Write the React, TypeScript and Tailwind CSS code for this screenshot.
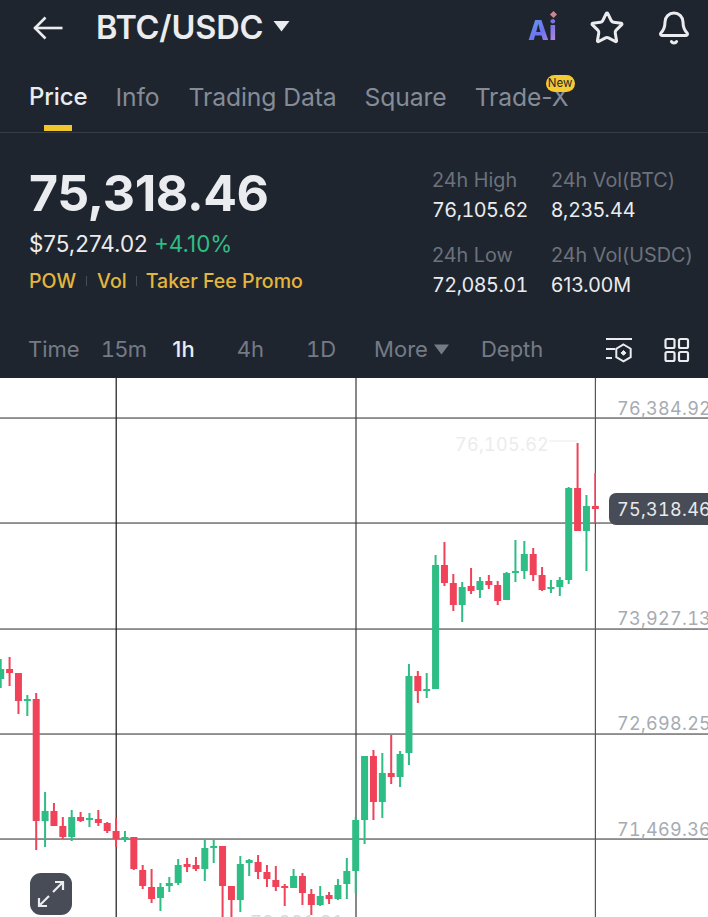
import React from "react";
import { Star, Bell } from "lucide-react";

const G = "#2EBD85";
const R = "#F0435A";
type C = [number, number, number, number, number];
// [high, low, bodyTop, bodyBottom, colour 0=green 1=red]
const candles: C[] = [
  [659,688,669,679,0],[657,686,669,673,1],[673,714,673,701,1],[695,716,699,701,0],[693,850,699,821,1],
  [792,847,811,821,0],[803,826,811,826,1],[817,839,826,837,1],[810,841,817,837,0],[812,822,817,821,1],
  [813,827,818,820,0],[810,826,819,823,1],[822,833,823,831,1],[818,847,831,839,1],[831,842,837,839,0],
  [837,870,837,869,1],[865,889,870,886,1],[869,903,887,899,1],[883,911,887,898,0],[877,892,883,886,0],
  [859,885,865,883,0],[858,872,864,867,1],[857,871,865,869,1],[840,881,848,869,0],[840,863,846,848,0],
  [846,917,846,886,1],[886,917,886,900,1],[856,912,864,900,0],[859,876,860,863,0],[855,879,862,872,1],
  [865,887,872,879,1],[866,891,880,887,1],[884,906,886,888,1],[869,888,876,888,0],[873,905,876,893,1],
  [889,915,894,905,1],[886,906,896,905,0],[892,904,895,899,1],[879,900,885,899,0],[858,899,871,884,0],
  [817,893,820,871,0],[756,844,756,820,0],[750,820,756,802,1],[753,818,773,802,0],[735,784,773,777,1],
  [751,787,754,777,0],[664,765,676,753,0],[671,703,676,691,1],[673,698,689,691,0],[555,689,565,689,0],
  [542,586,565,583,1],[574,611,583,605,1],[582,622,587,605,0],[568,594,586,591,1],[577,598,581,590,0],
  [575,589,581,585,1],[581,605,585,601,1],[572,600,573,600,0],[540,582,571,573,0],[541,579,554,571,0],
  [548,581,554,575,1],[567,591,575,590,1],[580,593,587,589,0],[577,596,580,587,0],[487,584,488,580,0],
  [443,531,488,531,1],[495,571,506,531,0],[473,523,506,509,1],
];

function ChartLines() {
  return (
    <svg className="absolute inset-0" width="708" height="539" viewBox="0 378 708 539">
      {[418, 523, 629, 734, 839].map((y) => (
        <rect key={y} x="0" y={y - 0.6} width="708" height="1.3" fill="#5a5a5a" />
      ))}
      <rect x="115.6" y="378" width="1.2" height="539" fill="#1a1a1a" />
      <rect x="355.4" y="378" width="1.2" height="539" fill="#3a3a3a" />
      <rect x="594.8" y="378" width="1.2" height="539" fill="#555555" />
      <rect x="549" y="440.5" width="29" height="1" fill="#ececec" />
      {candles.map(([hi, lo, top, bot, c], i) => {
        const x = 0.7 + 8.875 * i;
        const f = c ? R : G;
        const last = i === candles.length - 1;
        return (
          <g key={i} fill={f}>
            <rect x={x - 1} y={hi} width={last ? 1.6 : 2} height={lo - hi} />
            <rect x={x - 3.5} y={top} width="7" height={Math.max(bot - top, 2)} />
          </g>
        );
      })}
    </svg>
  );
}

export default function App() {
  return (
    <div className="w-[708px] h-[917px] overflow-hidden bg-white flex flex-col font-['Inter',sans-serif]">
      <header className="bg-[#1f252e] h-[378px] shrink-0 flex flex-col">
        {/* Top bar */}
        <div className="h-[56px] flex items-center pl-[33px] pr-[16px]">
          <svg width="30" height="24" viewBox="0 0 30 24" fill="none" stroke="#eaecef" strokeWidth="2.6">
            <path d="M1.5 12H29.5" />
            <path d="M12.5 1.5L2 12l10.5 10.5" />
          </svg>
          <span className="ml-[33px] text-[32.5px] font-semibold tracking-[-0.2px] text-[#eaecef]">BTC/USDC</span>
          <svg width="17" height="12" viewBox="0 0 17 12" className="ml-[10px] mb-[4px]">
            <path d="M0.5 1h16L8.5 11.5z" fill="#eaecef" />
          </svg>
          <div className="ml-auto flex items-center">
            <span className="relative mt-[5px] mr-[2px] w-[30px] h-[28px] flex items-center">
              <span className="text-[27px] leading-[28px] font-extrabold tracking-[0.3px] bg-gradient-to-br from-[#5b9df2] via-[#6f72ee] to-[#c78ad6] bg-clip-text text-transparent">Ai</span>
              <span className="absolute left-[23px] top-[-5px] w-[5px] h-[5px] rotate-45 bg-[#c9878f]" />
            </span>
            <Star size={36} strokeWidth={2} className="text-[#eaecef] ml-[29px]" />
            <Bell size={36} strokeWidth={2} className="text-[#eaecef] ml-[31px]" />
          </div>
        </div>
        {/* Tabs */}
        <div className="h-[77px] border-b border-[#363c45] relative flex items-start pl-[29px] pt-[24px] text-[24.7px] tracking-[-0.1px] text-[#848c98] leading-[34px]">
          <span className="text-[#eaecef] text-[24px] font-medium relative">
            Price
            <span className="absolute left-[15px] top-[45px] w-[28px] h-[6px] bg-[#f0c52e]" />
          </span>
          <span className="ml-[28px]">Info</span>
          <span className="ml-[29px]">Trading Data</span>
          <span className="ml-[28px]">Square</span>
          <span className="relative ml-[28px]">
            Trade-X
            <span className="absolute left-[71px] top-[-5px] w-[29px] h-[17px] rounded-full bg-[#f5cb33] text-[#1f2630] text-[11.5px] leading-[17px] text-center tracking-normal">New</span>
          </span>
        </div>
        {/* Stats */}
        <div className="h-[197px] flex justify-between pl-[29px]">
          <div className="flex flex-col">
            <div className="mt-[30px] text-[50px] leading-[60px] font-bold tracking-[-0.4px] text-[#eaecef]">75,318.46</div>
            <div className="mt-[7px] text-[22.4px] leading-[28px] text-[#eaecef]">
              $75,274.02 <span className="text-[#2ebd85]">+4.10%</span>
            </div>
            <div className="mt-[9px] flex items-center text-[19.6px] leading-[28px] font-medium text-[#e3b63d]">
              <span>POW</span>
              <span className="mx-[10px] w-px h-[10px] bg-[#474d57]" />
              <span>Vol</span>
              <span className="mx-[9px] w-px h-[10px] bg-[#474d57]" />
              <span>Taker Fee Promo</span>
            </div>
          </div>
          <div className="grid grid-cols-[119px_157px] mt-[32px] h-fit text-[19.8px] leading-[30px]">
            <div className="text-[#6c727c]">24h High</div>
            <div className="text-[#6c727c]">24h Vol(BTC)</div>
            <div className="text-[#eaecef] tabular-nums tracking-[-0.5px]">76,105.62</div>
            <div className="text-[#eaecef]">8,235.44</div>
            <div className="text-[#6c727c] mt-[15px]">24h Low</div>
            <div className="text-[#6c727c] mt-[15px]">24h Vol(USDC)</div>
            <div className="text-[#eaecef] tabular-nums tracking-[-0.5px]">72,085.01</div>
            <div className="text-[#eaecef]">613.00M</div>
          </div>
        </div>
        {/* Intervals */}
        <div className="h-[48px] flex items-center pl-[28px] pr-[18px] pb-[10px] text-[22px] text-[#747b87]">
          <span>Time</span>
          <span className="ml-[21px] tabular-nums tracking-[-0.7px]">15m</span>
          <span className="ml-[26px] text-[#eaecef] font-medium">1h</span>
          <span className="ml-[42px]">4h</span>
          <span className="ml-[42px] tabular-nums">1D</span>
          <span className="ml-[38px]">More</span>
          <svg width="15" height="11" viewBox="0 0 15 11" className="ml-[6px]">
            <path d="M0 0.5h15L7.5 10.5z" fill="#747b87" />
          </svg>
          <span className="ml-[32px]">Depth</span>
          <div className="ml-auto flex items-center gap-[31px] mt-[2px]">
            <svg width="28" height="26" viewBox="0 0 28 26" fill="none" stroke="#eaecef" strokeWidth="2">
              <path d="M1 2h26M1 12h9M1 21h6" />
              <path d="M18.5 7.5l7.2 4.2v8.4l-7.2 4.2-7.2-4.2v-8.4z" />
              <path d="M18.5 13.5l2.4 2.4-2.4 2.4-2.4-2.4z" fill="#eaecef" strokeWidth="1" />
            </svg>
            <svg width="26" height="26" viewBox="0 0 26 26" fill="none" stroke="#eaecef" strokeWidth="2.2">
              <rect x="1.5" y="2" width="9" height="9" rx="1.5" />
              <rect x="15" y="2" width="9" height="9" rx="1.5" />
              <rect x="1.5" y="15" width="9" height="9" rx="1.5" />
              <rect x="15" y="15" width="9" height="9" rx="1.5" />
            </svg>
          </div>
        </div>
      </header>

      {/* Chart */}
      <main className="relative flex-1 overflow-hidden text-[18px] tabular-nums tracking-[0.3px] text-[#a6abb2] leading-[22px]">
        <ChartLines />
        <span className="absolute left-[617px] top-[20px] whitespace-nowrap">76,384.92</span>
        <span className="absolute left-[617px] top-[230px] whitespace-nowrap">73,927.13</span>
        <span className="absolute left-[617px] top-[335px] whitespace-nowrap">72,698.25</span>
        <span className="absolute left-[617px] top-[441px] whitespace-nowrap">71,469.36</span>
        <span className="absolute left-[455px] top-[56px] whitespace-nowrap text-[#ececec]">76,105.62</span>
        <span className="absolute left-[609px] top-[115px] w-[110px] h-[32px] pl-[8px] rounded-l-[7px] bg-[#474c56] text-[#e8eaed] leading-[34px] whitespace-nowrap">75,318.46</span>
        <span className="absolute left-[250px] top-[534px] whitespace-nowrap text-[#d8dade]">70,981.31</span>
        <div className="absolute left-[30px] top-[495px] w-[42px] h-[42px] rounded-[11px] bg-[#474c56] flex items-center justify-center">
          <svg width="30" height="30" viewBox="0 0 30 30" fill="none" stroke="#eaecef" strokeWidth="2.2">
            <path d="M17 13L27 3M19 3h8v8" />
            <path d="M13 17L3 27M3 19v8h8" />
          </svg>
        </div>
      </main>
    </div>
  );
}
